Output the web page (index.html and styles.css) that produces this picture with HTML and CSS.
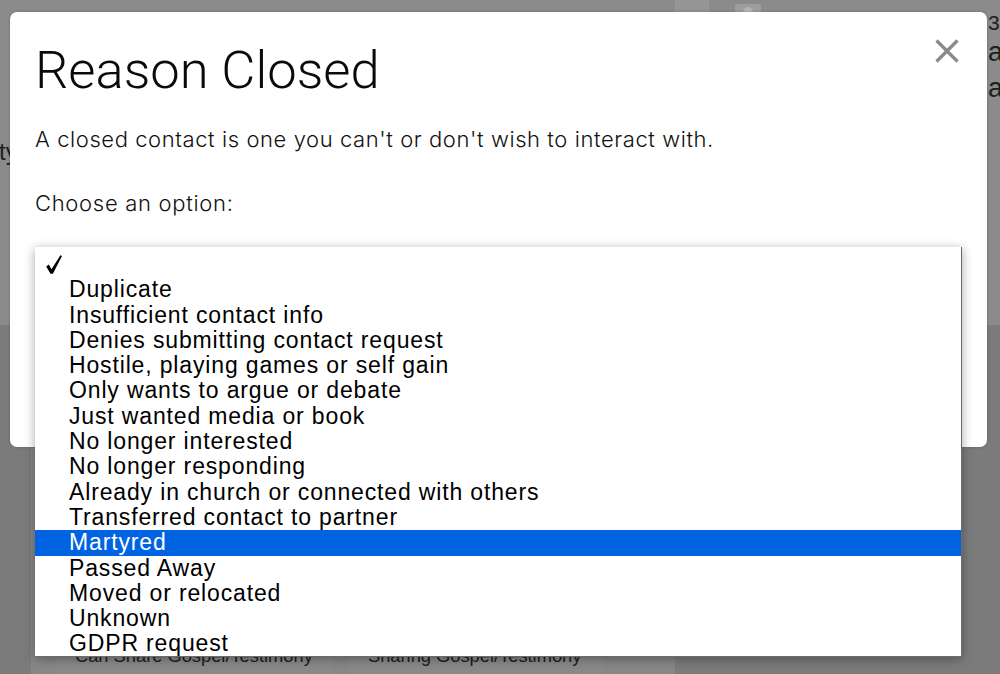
FILE: index.html
```html
<!DOCTYPE html>
<html lang="en">
<head>
<meta charset="utf-8">
<title>Reason Closed</title>
<link rel="stylesheet" href="styles.css">
</head>
<body>
<div class="page">
  <div class="top">
    <div class="left-col"><span class="frag-left">ty</span></div>
    <div class="top-main">
      <div class="header-strip">
        <div class="tab-block"></div>
        <div class="avatar"><span class="avatar-head"></span></div>
      </div>
    </div>
    <div class="right-col">
      <div class="num">3</div>
      <div class="frag-right">ac</div>
      <div class="frag-right">at</div>
    </div>
  </div>
  <div class="lower">
    <div class="card">
      <div class="chip">Can Share Gospel/Testimony</div>
      <div class="chip">Sharing Gospel/Testimony</div>
    </div>
  </div>
</div>

<div class="modal">
  <button class="close" aria-label="Close">
    <svg width="24" height="24" viewBox="0 0 24 24"><path d="M1.5 1.5 L22.5 22.5 M22.5 1.5 L1.5 22.5" stroke="#8a8a8a" stroke-width="3.2" fill="none"/></svg>
  </button>
  <h1 class="title">Reason Closed</h1>
  <p class="desc">A closed contact is one you can't or don't wish to interact with.</p>
  <p class="desc label">Choose an option:</p>
</div>

<ul class="dropdown">
  <li class="opt"><span class="mark"><svg width="16" height="19" viewBox="0 0 16 19"><path d="M0.2 11.4 L2.8 9.6 L5.5 14.2 L14.4 0.3 L16 1 L6.9 18.7 L4.5 18.7 Z" fill="#000"/></svg></span><span class="txt"></span></li>
  <li class="opt"><span class="mark"></span><span class="txt">Duplicate</span></li>
  <li class="opt"><span class="mark"></span><span class="txt">Insufficient contact info</span></li>
  <li class="opt"><span class="mark"></span><span class="txt">Denies submitting contact request</span></li>
  <li class="opt"><span class="mark"></span><span class="txt">Hostile, playing games or self gain</span></li>
  <li class="opt"><span class="mark"></span><span class="txt">Only wants to argue or debate</span></li>
  <li class="opt"><span class="mark"></span><span class="txt">Just wanted media or book</span></li>
  <li class="opt"><span class="mark"></span><span class="txt">No longer interested</span></li>
  <li class="opt"><span class="mark"></span><span class="txt">No longer responding</span></li>
  <li class="opt"><span class="mark"></span><span class="txt">Already in church or connected with others</span></li>
  <li class="opt"><span class="mark"></span><span class="txt">Transferred contact to partner</span></li>
  <li class="opt selected"><span class="mark"></span><span class="txt">Martyred</span></li>
  <li class="opt"><span class="mark"></span><span class="txt">Passed Away</span></li>
  <li class="opt"><span class="mark"></span><span class="txt">Moved or relocated</span></li>
  <li class="opt"><span class="mark"></span><span class="txt">Unknown</span></li>
  <li class="opt"><span class="mark"></span><span class="txt">GDPR request</span></li>
</ul>
</body>
</html>
```

FILE: styles.css
```css
* { box-sizing: border-box; }

html, body {
  margin: 0;
  padding: 0;
}

body {
  width: 1000px;
  height: 674px;
  overflow: hidden;
  position: relative;
  background: #7b7b7b;
  font-family: "Liberation Sans", Arial, sans-serif;
  color: #1c1c1c;
}

/* ---------- dimmed page underneath ---------- */
.page {
  height: 674px;
  display: flex;
  flex-direction: column;
}

.top {
  height: 325px;
  background: #8b8b8b;
  display: flex;
}

.left-col {
  width: 10px;
  padding-top: 138px;
  overflow: hidden;
}

.frag-left {
  display: block;
  margin-left: -1px;
  font-size: 24px;
  line-height: 28px;
  color: #1e1e1e;
}

.top-main {
  flex: 1;
}

.header-strip {
  height: 12px;
  display: flex;
  align-items: flex-start;
  padding-left: 665px;
}

.tab-block {
  width: 34px;
  height: 12px;
  background: #959595;
}

.avatar {
  width: 26px;
  height: 12px;
  margin-left: 26px;
  margin-top: 4px;
  background: #9d9d9d;
  display: flex;
  justify-content: center;
  overflow: hidden;
}

.avatar-head {
  width: 10px;
  height: 10px;
  margin-top: 3px;
  border-radius: 50%;
  background: #b4b4b4;
}

.right-col {
  width: 13px;
  overflow: hidden;
  padding-top: 12px;
  padding-left: 1px;
  white-space: nowrap;
}

.num {
  font-size: 21px;
  line-height: 22px;
  color: #1e1e1e;
}

.frag-right {
  font-size: 27px;
  line-height: 36px;
  color: #1e1e1e;
}

.frag-right:first-of-type {
  margin-top: 6px;
}

.lower {
  flex: 1;
  display: flex;
  padding-left: 31px;
  padding-top: 20px;
}

.card {
  width: 644px;
  background: #878787;
  display: flex;
  align-items: flex-end;
  gap: 17px;
  padding-left: 25px;
}

.chip {
  height: 36px;
  padding: 6px 0 0 19px;
  background: #898989;
  font-size: 18.3px;
  line-height: 24px;
  color: #1e1e1e;
  white-space: nowrap;
}

.chip:first-child { width: 276px; }
.chip:last-child { width: 254px; }

/* ---------- modal ---------- */
.modal {
  position: absolute;
  left: 10px;
  top: 12px;
  width: 977px;
  height: 435px;
  background: #ffffff;
  border-radius: 7px;
  box-shadow: 0 0 3px rgba(0, 0, 0, 0.25);
  padding: 27px 25px 0 25px;
}

.close {
  position: absolute;
  top: 27px;
  right: 28px;
  width: 24px;
  height: 24px;
  padding: 0;
  border: 0;
  background: none;
  display: block;
}

.close svg { display: block; }

.title {
  margin: 0;
  font-family: Roboto, "Liberation Sans", sans-serif;
  font-weight: 300;
  font-size: 52.5px;
  line-height: 62px;
  color: #0a0a0a;
}

.desc {
  margin: 22px 0 0 0;
  font-family: Inter, Roboto, "Liberation Sans", sans-serif;
  font-weight: 300;
  font-size: 22px;
  line-height: 33px;
  letter-spacing: 0.58px;
  color: #111;
}

.desc.label {
  margin-top: 31px;
  letter-spacing: 0.7px;
}

/* ---------- native-like select popup ---------- */
.dropdown {
  position: absolute;
  left: 35px;
  top: 247px;
  width: 927px;
  height: 410px;
  margin: 0;
  padding: 5px 0 0 0;
  list-style: none;
  background: #fff;
  border-right: 1px solid #6c6c6c;
  border-bottom: 1px solid #6c6c6c;
  box-shadow: 0 2px 10px rgba(0, 0, 0, 0.35);
}

.opt {
  display: flex;
  height: 25.3px;
  align-items: center;
  font-size: 23px;
  letter-spacing: 0.85px;
  line-height: 25.3px;
  color: #000;
  white-space: nowrap;
}

.mark {
  width: 34px;
  flex: none;
  padding-left: 11px;
  display: flex;
  align-items: center;
}

.mark svg { display: block; }

.opt.selected {
  background: #0063e1;
  color: #fff;
}
```
